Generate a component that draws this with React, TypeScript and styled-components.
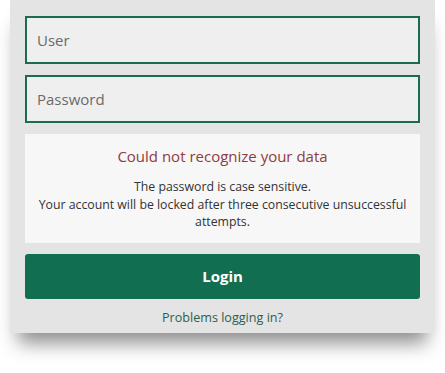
import React from "react";
import styled, { createGlobalStyle } from "styled-components";

const Global = createGlobalStyle`
  html, body { margin: 0; padding: 0; background: #ffffff; }
  body { font-family: "Open Sans", "Noto Sans", sans-serif; }
  * { box-sizing: border-box; }
`;

const Page = styled.div`
  padding: 0 10px 40px 10px;
`;

const Panel = styled.div`
  background: #e4e4e4;
  padding: 16px 15px 6px 15px;
  display: flex;
  flex-direction: column;
  gap: 11px;
  box-shadow: 0 18px 18px -8px rgba(0, 0, 0, 0.45);
`;

const Field = styled.input`
  height: 48px;
  width: 100%;
  border: 2px solid #1d6a4e;
  background: #efefef;
  padding: 0 10px;
  font-family: "Open Sans", "Noto Sans", sans-serif;
  font-size: 15px;
  color: #333;
  outline: none;
  &::placeholder { color: #6a6a6a; }
`;

const Message = styled.div`
  background: #f7f7f7;
  padding: 12px 10px 12px;
  text-align: center;
  display: flex;
  flex-direction: column;
  gap: 12px;
`;

const MessageTitle = styled.div`
  color: #8e3c41;
  font-size: 15px;
  line-height: 20px;
`;

const MessageText = styled.div`
  color: #333333;
  font-size: 12.3px;
  line-height: 17.5px;
`;

const LoginButton = styled.button`
  height: 45px;
  width: 100%;
  border: none;
  border-radius: 3px;
  background: #126e50;
  color: #ffffff;
  font-family: "Open Sans", "Noto Sans", sans-serif;
  font-weight: 700;
  font-size: 15px;
`;

const HelpLink = styled.a`
  display: block;
  text-align: center;
  color: #2d5e4c;
  font-size: 12.6px;
  line-height: 18px;
  text-decoration: none;
  margin-top: -1px;
`;

export default function App() {
  return (
    <>
      <Global />
      <Page>
        <Panel>
          <Field placeholder="User" />
          <Field placeholder="Password" type="password" />
          <Message>
            <MessageTitle>Could not recognize your data</MessageTitle>
            <MessageText>
              The password is case sensitive.
              <br />
              Your account will be locked after three consecutive unsuccessful attempts.
            </MessageText>
          </Message>
          <LoginButton>Login</LoginButton>
          <HelpLink href="#">Problems logging in?</HelpLink>
        </Panel>
      </Page>
    </>
  );
}
